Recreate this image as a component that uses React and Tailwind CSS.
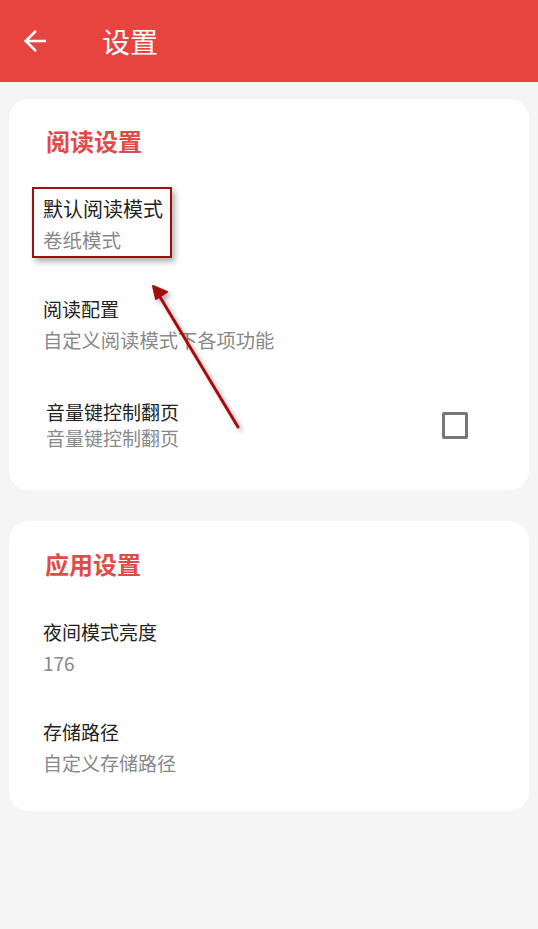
export default function App() {
  const font = { fontFamily: '"Noto Sans CJK SC", "Noto Sans", sans-serif' };

  return (
    <div className="w-[538px] min-h-[929px] bg-[#f5f5f5]" style={font}>
      {/* Top bar */}
      <header className="h-[82px] bg-[#e8443f] flex items-center">
        <button className="w-[70px] h-[82px] flex items-center justify-center" aria-label="返回">
          <svg className="w-[26px] h-[26px] text-white" viewBox="0 0 24 24" fill="none" stroke="currentColor" strokeWidth={2.4} strokeLinecap="square">
            <path d="M21 12H3.5M12 3.5 3.5 12l8.5 8.5" />
          </svg>
        </button>
        <h1 className="ml-[32px] text-[28px] leading-[36px] text-white">设置</h1>
      </header>

      <main className="px-[9px] pt-[17px] flex flex-col gap-[31px]">
        {/* Reading settings */}
        <section className="relative bg-white rounded-[20px] pt-[26px] pb-[39px] pl-[34px] pr-[61px]">
          <h2 className="text-[24px] leading-[32px] font-bold text-[#e24a47] pl-[3px]">阅读设置</h2>

          <div className="relative mt-[38px]">
            <div className="absolute left-[-11px] top-[-8px] w-[140px] h-[71px] border-2 border-[#9e1010] shadow-[3px_4px_6px_rgba(0,0,0,0.3)]" />
            <p className="text-[20px] leading-[28px] text-[#222]">默认阅读模式</p>
            <p className="mt-[3px] text-[19.5px] leading-[28px] text-[#888]">卷纸模式</p>
          </div>

          <div className="mt-[41px]">
            <p className="text-[19px] leading-[28px] text-[#222]">阅读配置</p>
            <p className="mt-[3px] text-[19.3px] leading-[28px] text-[#888]">自定义阅读模式下各项功能</p>
          </div>

          <div className="mt-[45px] pl-[3px] flex items-center justify-between">
            <div>
              <p className="text-[19px] leading-[26px] text-[#222]">音量键控制翻页</p>
              <p className="text-[19px] leading-[26px] text-[#888]">音量键控制翻页</p>
            </div>
            <div className="w-[26px] h-[27px] border-[3px] border-[#767676] rounded-[2px]" />
          </div>

          {/* Annotation arrow */}
          <svg className="absolute left-0 top-0 w-[520px] h-[390px] pointer-events-none" viewBox="0 0 520 390">
            <defs>
              <filter id="sh" x="-20%" y="-20%" width="140%" height="140%">
                <feDropShadow dx="3" dy="3" stdDeviation="2" floodColor="#000" floodOpacity="0.3" />
              </filter>
            </defs>
            <g filter="url(#sh)">
              <path d="M229 328 L151 198" stroke="#a50f0f" strokeWidth="3" strokeLinecap="round" />
              <path d="M144 187 L158 193 L147 200 Z" fill="#a50f0f" stroke="#a50f0f" strokeWidth="2" strokeLinejoin="round" />
            </g>
          </svg>
        </section>

        {/* App settings */}
        <section className="bg-white rounded-[20px] pt-[27px] pb-[34px] pl-[34px] pr-[46px]">
          <h2 className="text-[24px] leading-[32px] font-bold text-[#e24a47] pl-[2px]">应用设置</h2>

          <div className="mt-[38px]">
            <p className="text-[19px] leading-[28px] text-[#222]">夜间模式亮度</p>
            <p className="mt-[3px] text-[19px] leading-[28px] text-[#888]">176</p>
          </div>

          <div className="mt-[41px]">
            <p className="text-[19px] leading-[28px] text-[#222]">存储路径</p>
            <p className="mt-[3px] text-[19px] leading-[28px] text-[#888]">自定义存储路径</p>
          </div>
        </section>
      </main>
    </div>
  );
}
